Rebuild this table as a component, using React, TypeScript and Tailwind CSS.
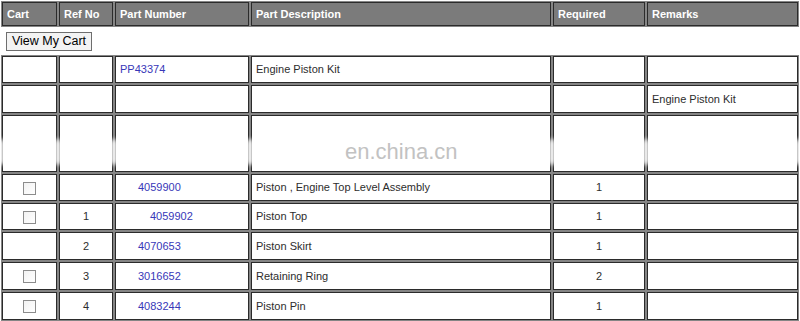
import React from 'react';

type Row = {
  h: string;
  check?: boolean;
  ref?: string;
  part?: string;
  indent?: string;
  desc?: string;
  qty?: string;
  remarks?: string;
};

const rows: Row[] = [
  { h: 'h-[27px]', part: 'PP43374', indent: 'pl-1', desc: 'Engine Piston Kit' },
  { h: 'h-[28px]', remarks: 'Engine Piston Kit' },
  { h: 'h-[57px]' },
  { h: 'h-[27px]', check: true, part: '4059900', indent: 'pl-[22px]', desc: 'Piston , Engine Top Level Assembly', qty: '1' },
  { h: 'h-[27px]', check: true, ref: '1', part: '4059902', indent: 'pl-[34px]', desc: 'Piston Top', qty: '1' },
  { h: 'h-[28px]', ref: '2', part: '4070653', indent: 'pl-[22px]', desc: 'Piston Skirt', qty: '1' },
  { h: 'h-[28px]', check: true, ref: '3', part: '3016652', indent: 'pl-[22px]', desc: 'Retaining Ring', qty: '2' },
  { h: 'h-[28px]', check: true, ref: '4', part: '4083244', indent: 'pl-[22px]', desc: 'Piston Pin', qty: '1' },
];

const headers = ['Cart', 'Ref No', 'Part Number', 'Part Description', 'Required', 'Remarks'];

const cell = 'border border-[#2b2b2b] shadow-[0_0_0_1px_#858585] align-middle p-0';

// soft white smudges sitting on the column rules of the tall row
const smudges = ['left-[-2px]', 'left-[55px]', 'left-[111px]', 'left-[247px]', 'left-[549px]', 'left-[643px]', 'left-[796px]'];

function CheckBox() {
  return <span className="inline-block w-[13px] h-[13px] border border-[#8c8c8c] bg-gradient-to-br from-[#f2f2f2] to-white align-middle" />;
}

export default function App() {
  return (
    <div className="relative w-[800px] h-[321px] overflow-hidden bg-white font-['Liberation_Sans',Arial,sans-serif]">
      <table className="w-[800px] table-fixed border-separate border-spacing-0.5 text-[11px] text-[#2d2d2d]">
        <colgroup>
          <col className="w-[55px]" />
          <col className="w-[54px]" />
          <col className="w-[134px]" />
          <col className="w-[300px]" />
          <col className="w-[92px]" />
          <col className="w-[151px]" />
        </colgroup>
        <thead>
          <tr className="h-[24px]">
            {headers.map((t) => (
              <th key={t} className={`${cell} bg-[#7b7b7b] text-left pl-1 text-[11px] font-bold text-white`}>
                {t}
              </th>
            ))}
          </tr>
        </thead>
        <tbody>
          <tr className="h-[26px]">
            <td colSpan={6} className="p-0 pl-1 align-middle">
              <button className="h-[19px] w-[86px] border border-[#6e6e6e] bg-[#f3f3f3] text-[12.5px] leading-none text-black">
                View My Cart
              </button>
            </td>
          </tr>
          {rows.map((r, i) => (
            <tr key={i} className={r.h}>
              <td className={`${cell} text-center`}>{r.check && <CheckBox />}</td>
              <td className={`${cell} text-center`}>{r.ref}</td>
              <td className={`${cell} ${r.indent ?? ''}`}>
                {r.part && <a className="text-[#3838b8]">{r.part}</a>}
              </td>
              <td className={`${cell} pl-1`}>{r.desc}</td>
              <td className={`${cell} text-center`}>{r.qty}</td>
              <td className={`${cell} pl-1`}>{r.remarks}</td>
            </tr>
          ))}
        </tbody>
      </table>

      {smudges.map((s) => (
        <div key={s} className={`absolute ${s} top-[139px] w-[6px] h-[26px] rounded-full bg-white blur-[2px]`} />
      ))}
      <div className="absolute left-[345px] top-[141px] text-[22px] leading-none text-[#c2c2c2]">en.china.cn</div>
    </div>
  );
}
